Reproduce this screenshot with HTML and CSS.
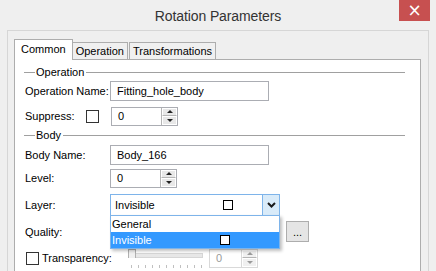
FILE: index.html
```html
<!DOCTYPE html>
<html lang="en">
<head>
    <meta charset="UTF-8">
    <title>Rotation Parameters</title>
    <link rel="stylesheet" href="styles.css">
</head>
<body>

<div class="window">
    <div class="titlebar">
        <span></span>
        <span class="title">Rotation Parameters</span>
        <button class="close">&times;</button>
    </div>

    <div class="frame">
        <div class="tabs">
            <div class="tab active">Common</div>
            <div class="tab">Operation</div>
            <div class="tab">Transformations</div>
        </div>

        <div class="panel">
            <div class="group">Operation</div>
            <div class="row r-name">
                <label class="lbl">Operation Name:</label>
                <div class="textbox">Fitting_hole_body</div>
            </div>
            <div class="row r-suppress">
                <label class="lbl short">Suppress:</label>
                <span class="check"></span>
                <div class="spin">
                    <span class="spin-val">0</span>
                    <span class="spin-btns"><i class="up"></i><i class="down"></i></span>
                </div>
            </div>

            <div class="group g-body">Body</div>
            <div class="row r-bname">
                <label class="lbl">Body Name:</label>
                <div class="textbox">Body_166</div>
            </div>
            <div class="row r-level">
                <label class="lbl">Level:</label>
                <div class="spin">
                    <span class="spin-val">0</span>
                    <span class="spin-btns"><i class="up"></i><i class="down"></i></span>
                </div>
            </div>
            <div class="row r-layer">
                <label class="lbl">Layer:</label>
                <div class="combo open">
                    <span class="combo-val">Invisible</span>
                    <span class="swatch"></span>
                    <span class="combo-btn">
                        <svg width="9" height="6" viewBox="0 0 9 6"><path d="M1 1 L4.5 4.5 L8 1" fill="none" stroke="#1a1a1a" stroke-width="2"/></svg>
                    </span>
                    <ul class="dropdown">
                        <li>General</li>
                        <li class="sel">Invisible<span class="swatch"></span></li>
                    </ul>
                </div>
            </div>
            <div class="row r-quality">
                <label class="lbl">Quality:</label>
                <div class="combo hidden-combo"></div>
                <button class="dots">...</button>
            </div>
            <div class="row r-transp">
                <span class="check small"></span>
                <label class="lbl-t">Transparency:</label>
                <div class="slider">
                    <div class="track"></div>
                    <div class="thumb"></div>
                    <div class="ticks">
                        <i></i><i></i><i></i><i></i><i></i><i></i><i></i><i></i><i></i><i></i><i></i>
                    </div>
                </div>
                <div class="spin disabled">
                    <span class="spin-val">0</span>
                    <span class="spin-btns"><i class="up"></i><i class="down"></i></span>
                </div>
            </div>
        </div>
    </div>
</div>

</body>
</html>
```

FILE: styles.css
```css
body {
    margin: 0;
    padding: 0;
    background-color: #efefef;
    font-family: "Liberation Sans", Arial, sans-serif;
    font-size: 11px;
    color: #000;
    overflow: hidden;
    white-space: nowrap;
}

.window {
    width: 436px;
    height: 271px;
    overflow: hidden;
    background-color: #efefef;
}

.titlebar {
    display: grid;
    grid-template-columns: 1fr auto 1fr;
    align-items: start;
    height: 30px;
}

.title {
    font-size: 14px;
    letter-spacing: -0.1px;
    color: #333;
    padding-top: 8px;
}

.close {
    justify-self: end;
    width: 31px;
    height: 21px;
    margin-right: 6px;
    border: none;
    padding: 0;
    background-color: #c75050;
    color: #fff;
    font-size: 17px;
    line-height: 19px;
    font-family: "DejaVu Sans", sans-serif;
}

.frame {
    margin-left: 7px;
    width: 422px;
    height: 241px;
    box-sizing: border-box;
    border: 1px solid #d6d6d6;
    border-bottom: none;
    padding: 8px 7px 0 6px;
    overflow: hidden;
}

.tabs {
    display: flex;
    align-items: flex-end;
    height: 20px;
    position: relative;
    z-index: 2;
}

.tab {
    height: 16px;
    padding: 0 3px;
    border: 1px solid #adadad;
    border-bottom: none;
    background-color: #f0f0f0;
    line-height: 16px;
    margin-left: -1px;
}

.tab + .tab + .tab { margin-left: 1px; }

.tab.active {
    height: 20px;
    line-height: 18px;
    margin-left: 0;
    padding: 0 6px;
    background-color: #fff;
    margin-bottom: -1px;
}

.panel {
    height: 213px;
    box-sizing: border-box;
    border: 1px solid #adadad;
    border-bottom: none;
    background-color: #fff;
    padding-top: 5px;
}

.group {
    display: flex;
    align-items: center;
    height: 14px;
    padding-left: 9px;
    margin-right: 15px;
}

.group::before {
    content: "";
    width: 11px;
    height: 1px;
    margin-right: 1px;
    background-color: #a0a0a0;
}

.group::after {
    content: "";
    flex: 1;
    height: 1px;
    margin-left: 2px;
    background-color: #a0a0a0;
}

.g-body { margin-top: 2px; }

.row {
    display: flex;
    align-items: center;
    padding-left: 10px;
}

.lbl {
    width: 85px;
    flex-shrink: 0;
}

.lbl.short { width: 61px; }

.r-name { margin-top: 2px; height: 20px; }
.r-suppress { margin-top: 5px; height: 20px; }
.r-bname { margin-top: 3px; height: 20px; }
.r-level { margin-top: 3px; height: 20px; }
.r-layer { margin-top: 6px; height: 22px; position: relative; z-index: 3; }
.r-quality { margin-top: 5px; height: 21px; }
.r-transp { margin-top: 6px; height: 20px; }

.textbox {
    width: 159px;
    height: 20px;
    box-sizing: border-box;
    border: 1px solid #abadb3;
    padding-left: 6px;
    line-height: 18px;
}

.check {
    width: 13px;
    height: 13px;
    box-sizing: border-box;
    border: 1px solid #333;
    margin-right: 12px;
}

.check.small {
    margin-left: 1px;
    margin-right: 3px;
}

.spin {
    display: flex;
    width: 67px;
    height: 19px;
    box-sizing: border-box;
    border: 1px solid #abadb3;
}

.spin-val {
    flex: 1;
    padding-left: 6px;
    line-height: 17px;
}

.spin-btns {
    display: flex;
    flex-direction: column;
    width: 15px;
    border-left: 1px solid #b5b5b5;
}

.spin-btns i {
    flex: 1;
    display: flex;
    align-items: center;
    justify-content: center;
    background-color: #e8e8e8;
    border: 1px solid #fff;
}

.spin-btns i::after {
    content: "";
    border-left: 3px solid transparent;
    border-right: 3px solid transparent;
}

.spin-btns .up { border-bottom-color: #b5b5b5; }
.spin-btns .up::after { border-bottom: 3px solid #222; }
.spin-btns .down::after { border-top: 3px solid #222; }

.spin.disabled {
    width: 49px;
    margin-left: 6px;
    border-color: #d9d9d9;
    color: #9a9a9a;
}

.spin.disabled .spin-btns { border-left-color: #d9d9d9; }
.spin.disabled .spin-btns i { background-color: #f0f0f0; }
.spin.disabled .up::after { border-bottom-color: #9a9a9a; }
.spin.disabled .down::after { border-top-color: #9a9a9a; }

.combo {
    position: relative;
    display: flex;
    align-items: center;
    width: 170px;
    height: 22px;
    box-sizing: border-box;
    border: 1px solid #7eb4ea;
}

.combo-val {
    flex: 1;
    padding-left: 4px;
}

.swatch {
    width: 10px;
    height: 10px;
    box-sizing: border-box;
    border: 1px solid #000;
    background-color: #fff;
}

.combo > .swatch { margin-right: 29px; }

.combo-btn {
    width: 16px;
    height: 20px;
    display: flex;
    align-items: center;
    justify-content: center;
    background-color: #d9ebf9;
    border-left: 1px solid #7eb4ea;
}

.dropdown {
    position: absolute;
    top: 20px;
    left: -1px;
    width: 168px;
    margin: 0;
    padding: 0;
    list-style: none;
    background-color: #fff;
    border: 1px solid #7eb4ea;
    box-shadow: 2px 2px 3px rgba(0, 0, 0, 0.25);
}

.dropdown li {
    display: flex;
    align-items: center;
    height: 16px;
    padding-left: 1px;
}

.dropdown li.sel {
    background-color: #3399ff;
    color: #fff;
}

.dropdown li .swatch {
    margin-left: 68px;
}

.hidden-combo {
    width: 170px;
    height: 21px;
    border-color: #abadb3;
}

.dots {
    width: 23px;
    height: 21px;
    margin-left: 6px;
    padding: 0;
    border: 1px solid #adadad;
    background-color: #e5e5e5;
    font-family: "Liberation Sans", Arial, sans-serif;
    font-size: 11px;
    line-height: 14px;
}

.lbl-t {
    width: 86px;
}

.slider {
    position: relative;
    width: 75px;
    height: 20px;
}

.track {
    margin-top: 5px;
    width: 73px;
    height: 3px;
    background-color: #e7e7e7;
    border: 1px solid #d6d6d6;
}

.thumb {
    position: absolute;
    left: 0;
    top: 1px;
    width: 6px;
    height: 8px;
    background-color: #f0f0f0;
    border: 1px solid #b0b0b0;
    border-bottom: none;
}

.ticks {
    display: flex;
    gap: 6px;
    margin-top: 7px;
    padding-left: 3px;
}

.ticks i {
    width: 1px;
    height: 3px;
    background-color: #c0c0c0;
}
```
